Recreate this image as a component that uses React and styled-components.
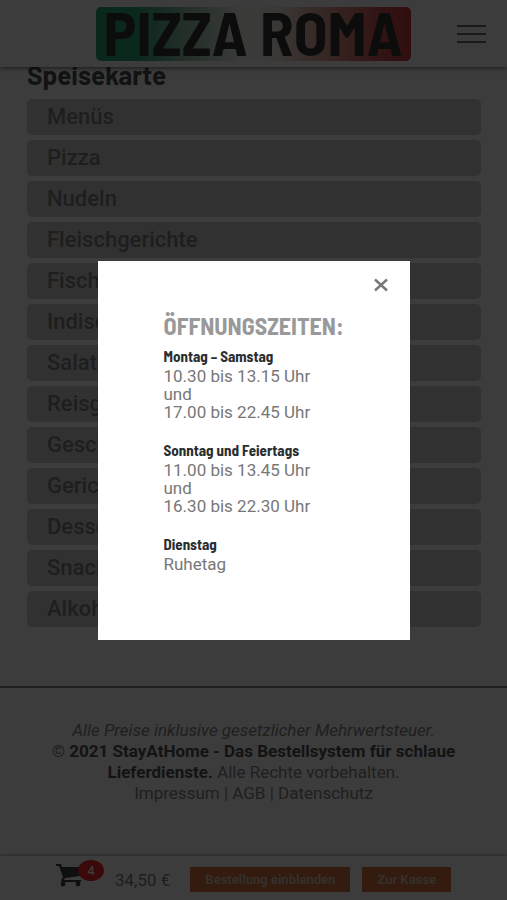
import React, { useState } from 'react';
import styled, { createGlobalStyle } from 'styled-components';

const GlobalStyle = createGlobalStyle`
    * {
        box-sizing: border-box;
    }

    body {
        margin: 0;
        background: #fff;
        color: #777;
        font-family: Roboto, "Liberation Sans", sans-serif;
        font-size: 17px;
    }

    h1, h2, h3, p, ul {
        margin: 0;
        padding: 0;
    }

    a {
        color: inherit;
        text-decoration: none;
    }
`;

const headingFont = '"Barlow Semi Condensed", "Roboto Condensed", Roboto, sans-serif';

const Header = styled.header`
    position: fixed;
    top: 0;
    left: 0;
    right: 0;
    z-index: 10;
    display: grid;
    grid-template-columns: 1fr auto 1fr;
    align-items: center;
    height: 67px;
    padding: 1px 21px 0;
    background: #fff;
    box-shadow: 0 1px 5px rgba(0, 0, 0, 0.7);
`;

const Logo = styled.a`
    grid-column: 2;
    display: block;

    svg {
        display: block;
        width: 315px;
        height: 54px;
    }
`;

const MenuButton = styled.button`
    justify-self: end;
    display: flex;
    flex-direction: column;
    gap: 6px;
    padding: 0;
    border: 0;
    background: none;
    cursor: pointer;
`;

const MenuLine = styled.span`
    width: 29px;
    height: 2px;
    background: #555;
`;

const Main = styled.main`
    padding: 60px 26px 59px 27px;
`;

const Title = styled.h1`
    margin-bottom: 9px;
    color: #2a2e30;
    font-family: Barlow, Roboto, sans-serif;
    font-size: 26px;
    font-weight: 700;
    line-height: 30px;
`;

const CategoryList = styled.ul`
    display: flex;
    flex-direction: column;
    gap: 5px;
    list-style: none;
`;

const Category = styled.a`
    display: block;
    padding: 0 20px;
    border-radius: 5px;
    background: #c9c9c9;
    color: #6b6b6b;
    font-size: 22px;
    font-weight: 500;
    line-height: 36px;
`;

const Footer = styled.footer`
    padding: 32px 40px 97px;
    border-top: 2px solid #6f6f6f;
    color: #6f6f6f;
    text-align: center;
    line-height: 21px;
`;

const Strong = styled.strong`
    color: #333;
    font-weight: 700;
`;

const CartBar = styled.div`
    position: fixed;
    bottom: 0;
    left: 0;
    right: 0;
    z-index: 10;
    display: flex;
    align-items: center;
    justify-content: center;
    height: 44px;
    padding-top: 3px;
    background: #fff;
    box-shadow: 0 -1px 3px rgba(0, 0, 0, 0.4);
`;

const Cart = styled.a`
    position: relative;
    align-self: flex-start;
    width: 48px;
    margin-top: 5px;
    margin-right: 11px;

    svg {
        display: block;
        width: 28px;
        height: 24px;
    }
`;

const Badge = styled.span`
    position: absolute;
    top: -4px;
    right: 0;
    width: 26px;
    border-radius: 50%;
    background: #ff0008;
    color: #fff;
    font-size: 13px;
    font-weight: 500;
    line-height: 21px;
    text-align: center;
`;

const Price = styled.span`
    margin-right: 20px;
    color: #666;
`;

const OrderButton = styled.button`
    padding: 0 15px;
    border: 0;
    background: #d35a1e;
    color: #d8c4b8;
    font-family: inherit;
    font-size: 13px;
    font-weight: 700;
    line-height: 25px;
    cursor: pointer;

    & + & {
        margin-left: 12px;
    }
`;

const Overlay = styled.div`
    position: fixed;
    inset: 0;
    z-index: 20;
    display: grid;
    place-items: center;
    background: rgba(11, 11, 11, 0.8);
`;

const Dialog = styled.div`
    position: relative;
    width: 312px;
    max-width: 90%;
    padding: 50px 0 67px 66px;
    background: #fff;
`;

const CloseButton = styled.button`
    position: absolute;
    top: 17px;
    right: 22px;
    padding: 0;
    border: 0;
    background: none;
    cursor: pointer;

    svg {
        display: block;
        width: 14px;
        height: 14px;
    }
`;

const DialogTitle = styled.h2`
    margin-bottom: 4px;
    color: #999;
    font-family: ${headingFont};
    font-size: 24px;
    font-weight: 700;
    line-height: 30px;
    white-space: nowrap;
`;

const Hours = styled.section`
    & + & {
        margin-top: 18px;
    }
`;

const Day = styled.h3`
    color: #2a2e30;
    font-family: ${headingFont};
    font-size: 15px;
    font-weight: 700;
    line-height: 22px;
`;

const Time = styled.p`
    color: #777;
    line-height: 18px;
`;

const categories = [
    'Menüs',
    'Pizza',
    'Nudeln',
    'Fleischgerichte',
    'Fischgerichte',
    'Indische Gerichte',
    'Salate',
    'Reisgerichte',
    'Geschnetzeltes',
    'Gerichte für Kinder',
    'Desserts',
    'Snacks',
    'Alkoholfreies',
];

const openingHours = [
    { day: 'Montag – Samstag', times: ['10.30 bis 13.15 Uhr', 'und', '17.00 bis 22.45 Uhr'] },
    { day: 'Sonntag und Feiertags', times: ['11.00 bis 13.45 Uhr', 'und', '16.30 bis 22.30 Uhr'] },
    { day: 'Dienstag', times: ['Ruhetag'] },
];

const LogoImage = () => (
    <svg viewBox="0 0 315 54" role="img" aria-label="Pizza Roma">
        <defs>
            <linearGradient id="flag">
                <stop offset="0" stopColor="#009a58" />
                <stop offset="0.13" stopColor="#0c9a60" />
                <stop offset="0.3" stopColor="#8fbf9f" />
                <stop offset="0.46" stopColor="#f4f6f2" />
                <stop offset="0.56" stopColor="#f6efe9" />
                <stop offset="0.72" stopColor="#dd9a88" />
                <stop offset="0.9" stopColor="#cc3a38" />
                <stop offset="1" stopColor="#c01822" />
            </linearGradient>
        </defs>
        <rect width="315" height="54" rx="5" fill="url(#flag)" />
        <text
            x="157"
            y="49"
            textAnchor="middle"
            fontFamily="Barlow Semi Condensed, Roboto Condensed, sans-serif"
            fontSize="62"
            fontWeight="700"
            fill="#111"
        >
            PIZZA ROMA
        </text>
    </svg>
);

const CartIcon = () => (
    <svg viewBox="0 0 28 24" fill="#222" aria-hidden="true">
        <path d="M0 0h5l1 3h20l-2 9-15 2-1 2h17v2H6l-1-2 2-3L3 2H0z" />
        <circle cx="7" cy="20" r="2.4" />
        <circle cx="22" cy="20" r="2.4" />
    </svg>
);

export default function App() {
    const [showHours, setShowHours] = useState(true);

    return (
        <>
            <GlobalStyle />
            <Header>
                <Logo href="#">
                    <LogoImage />
                </Logo>
                <MenuButton aria-label="Menü">
                    <MenuLine />
                    <MenuLine />
                    <MenuLine />
                </MenuButton>
            </Header>

            <Main>
                <Title>Speisekarte</Title>
                <CategoryList>
                    {categories.map(name => (
                        <li key={name}>
                            <Category href="#">{name}</Category>
                        </li>
                    ))}
                </CategoryList>
            </Main>

            <Footer>
                <p><em>Alle Preise inklusive gesetzlicher Mehrwertsteuer.</em></p>
                <p>
                    © <Strong>2021 StayAtHome - Das Bestellsystem für schlaue Lieferdienste.</Strong> Alle Rechte vorbehalten.
                </p>
                <p>
                    <a href="#">Impressum</a> | <a href="#">AGB</a> | <a href="#">Datenschutz</a>
                </p>
            </Footer>

            <CartBar>
                <Cart href="#" aria-label="Warenkorb">
                    <CartIcon />
                    <Badge>4</Badge>
                </Cart>
                <Price>34,50 €</Price>
                <OrderButton>Bestellung einblenden</OrderButton>
                <OrderButton>Zur Kasse</OrderButton>
            </CartBar>

            {showHours ?
                <Overlay>
                    <Dialog role="dialog" aria-modal="true" aria-labelledby="hours-title">
                        <CloseButton aria-label="Schließen" onClick={() => setShowHours(false)}>
                            <svg viewBox="0 0 14 14" stroke="#777" strokeWidth="2.4">
                                <path d="M1 1.5 13 12.5M13 1.5 1 12.5" />
                            </svg>
                        </CloseButton>
                        <DialogTitle id="hours-title">ÖFFNUNGSZEITEN:</DialogTitle>
                        {openingHours.map(({ day, times }) => (
                            <Hours key={day}>
                                <Day>{day}</Day>
                                {times.map(time => <Time key={time}>{time}</Time>)}
                            </Hours>
                        ))}
                    </Dialog>
                </Overlay>
            : null}
        </>
    );
}
